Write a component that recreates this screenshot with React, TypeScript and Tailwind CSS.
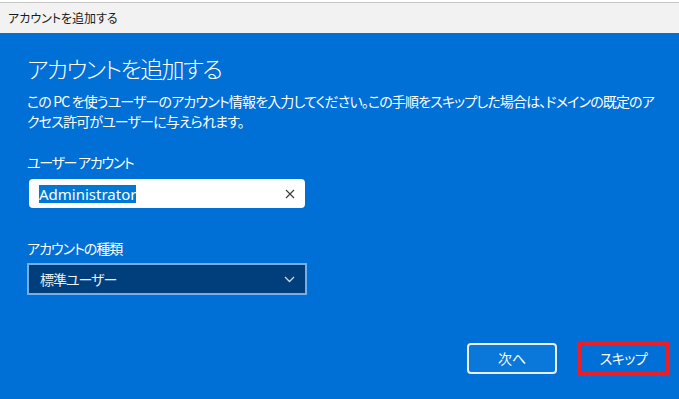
import React from 'react';

const jp = "font-['Noto_Sans_CJK_JP','Noto_Sans',sans-serif] [font-feature-settings:'palt']";

export default function App() {
  return (
    <div className={`w-[679px] h-[399px] flex flex-col bg-white overflow-hidden ${jp}`}>
      {/* Title bar */}
      <div className="h-[2px] bg-white" />
      <div className="h-[31px] bg-[#f2f2f2] border-t border-[#c6c6c6] flex items-center px-2">
        <span className="text-[12px] text-[#1b1b1b]">アカウントを追加する</span>
      </div>

      {/* Body */}
      <div className="flex-1 bg-[#006fd6] flex flex-col px-[27px] pt-[19px] pb-[23px] text-white">
        <h1 className="text-[23px] leading-[32px] font-light tracking-[-1.6px]">アカウントを追加する</h1>
        <p className="mt-[7px] text-[14px] leading-[20px] w-[632px] tracking-[-0.85px]">
          この PC を使うユーザーのアカウント情報を入力してください。この手順をスキップした場合は、ドメインの既定のアクセス許可がユーザーに与えられます。
        </p>

        <label className="mt-[21px] text-[14px] leading-[20px] tracking-[-1.3px]">ユーザー アカウント</label>
        <div className="mt-[7px] ml-[2px] w-[276px] h-[29px] bg-white rounded-[4px] flex items-center pl-[10px] pr-[10px]">
          <span className="bg-[#0078d7] text-white text-[15px] leading-[18px] font-['Noto_Sans',sans-serif]">
            Administrator
          </span>
          <svg className="ml-auto" width="10" height="10" viewBox="0 0 10 10">
            <path d="M1 1 L9 9 M9 1 L1 9" stroke="#3a3a3a" strokeWidth="1.1" fill="none" />
          </svg>
        </div>

        <label className="mt-[30px] text-[14px] leading-[20px] tracking-[-1px]">アカウントの種類</label>
        <div className="mt-[5px] w-[280px] h-[32px] bg-[#013f7c] border-2 border-[#76aee6] flex items-center pl-[11px] pr-[10px]">
          <span className="text-[14px] text-[#e8f0f8] tracking-[-1px]">標準ユーザー</span>
          <svg className="ml-auto" width="11" height="7" viewBox="0 0 11 7">
            <path d="M1 1 L5.5 5.5 L10 1" stroke="#c9dbef" strokeWidth="1.3" fill="none" />
          </svg>
        </div>

        <div className="mt-auto -mr-[18px] flex justify-end items-center gap-[20px]">
          <button className="w-[90px] h-[31px] rounded-[4px] border-2 border-[#e6f0fa] bg-[#0a78da] text-[14px] text-white">
            次へ
          </button>
          <button className="w-[93px] h-[35px] border-4 border-[#ee1c25] bg-[#006fd6] text-[14px] text-white tracking-[-0.5px]">
            スキップ
          </button>
        </div>
      </div>
    </div>
  );
}
